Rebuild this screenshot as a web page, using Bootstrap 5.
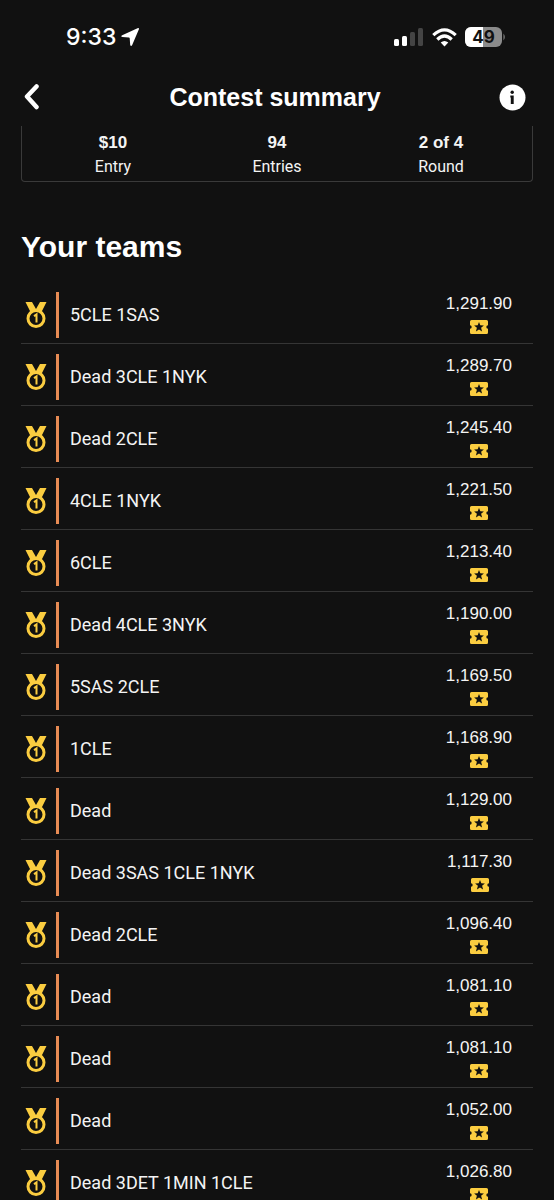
<!DOCTYPE html>
<html lang="en">
<head>
<meta charset="utf-8">
<meta name="viewport" content="width=device-width, initial-scale=1">
<title>Contest summary</title>
<link href="https://cdn.jsdelivr.net/npm/bootstrap@5.3.0/dist/css/bootstrap.min.css" rel="stylesheet">
<style>
  body { background: #111; color: #f4f4f4; font-family: "Liberation Sans", Arial, sans-serif; }
  .status-bar { height: 74px; padding: 0 48px 0 66px; }
  .clock { font: 500 23px/28px Inter, sans-serif; color: #fff; }
  .app-bar { height: 52px; padding: 0 28px 6px 24px; color: #fff; }
  .app-bar h1 { font-size: 25px; line-height: 32px; font-weight: 700; }
  .icon-btn { background: none; border: 0; padding: 0; color: inherit; width: 27px; }
  .scroller { scrollbar-width: none; padding: 0 21px; }
  .scroller::-webkit-scrollbar { display: none; }
  .facts { border: 1px solid #3a3a3a; border-top: 0; border-radius: 0 0 4px 4px; padding: 5px 9px 3px; height: 56px; }
  .facts dt { font-size: 17px; line-height: 24px; font-weight: 700; }
  .facts dd { font: 400 16px/23px Roboto, sans-serif; }
  .section-title { font-size: 30px; line-height: 40px; font-weight: 700; color: #fff; margin: 45px 0 15px; }
  .team { height: 62px; padding: 10px 21px 5px 3px; border-bottom: 1px solid #353535; }
  .team-bar { width: 3px; background: #e78b54; margin: 0 11px 0 8px; }
  .team-name { font: 400 18px/24px Roboto, sans-serif; }
  .score { font: 400 17px/24px "Liberation Sans", Arial, sans-serif; }
</style>
</head>
<body>
<svg class="d-none" aria-hidden="true">
  <symbol id="medal" viewBox="0 0 24 28">
    <path fill="#fbcd40" d="M1.500 1H8l4 7 4-7h6.500l-5 10h-11z"/>
    <circle cx="12" cy="17.500" r="8" fill="#111" stroke="#fbcd40" stroke-width="3"/>
    <path fill="none" stroke="#fbcd40" stroke-width="2" d="M10 15.200l2.500-1.700v8"/>
  </symbol>
  <symbol id="ticket" viewBox="0 0 18 14">
    <path fill="#fbcd40" d="M1.500 0h15Q18 0 18 1.500V5.300a1.700 1.700 0 0 0 0 3.400v3.800Q18 14 16.500 14h-15Q0 14 0 12.500V8.700a1.700 1.700 0 0 0 0-3.400V1.500Q0 0 1.500 0z"/>
    <path fill="#111" d="M9 2l1.300 3.300 3.600.2-2.800 2.300 1 3.600L9 9.400l-3.100 2 1-3.600-2.800-2.300 3.600-.2z"/>
  </symbol>
</svg>

<div class="vh-100 d-flex flex-column overflow-hidden">
  <div class="status-bar d-flex align-items-center justify-content-between flex-shrink-0">
    <div class="d-flex align-items-center">
      <span class="clock">9:33</span>
      <svg class="ms-1" width="20" height="20" viewBox="0 0 20 20" aria-hidden="true"><path fill="#fff" d="M17.500 1.200Q19.500.5 18.800 2.500L12.200 18Q11 20.200 10.200 18L9.700 11.200Q9.600 10.500 8.900 10.400L2.500 10Q.2 9.400 2.200 8.200z"/></svg>
    </div>
    <div class="d-flex align-items-center">
      <svg width="30" height="20" viewBox="0 0 30 20" aria-hidden="true"><rect y="12" width="5" height="7" rx="1.500" fill="#fff"/><rect x="8" y="9" width="5" height="10" rx="1.500" fill="#fff"/><rect x="16" y="5" width="5" height="14" rx="1.500" fill="#444"/><rect x="24" y="1" width="5" height="18" rx="1.500" fill="#444"/></svg>
      <svg class="ms-2" width="25" height="19" viewBox="0 0 25 19" aria-hidden="true"><g fill="none" stroke="#fff" stroke-width="3.200"><path d="M1.300 7.200Q12.500-3.400 23.700 7.200"/><path d="M5.300 11.500Q12.500 4.500 19.700 11.500"/></g><path fill="#fff" d="M8.700 14.500Q12.500 11.300 16.300 14.500L12.500 18.500z"/></svg>
      <svg class="ms-2" width="41" height="20" viewBox="0 0 41 20" role="img" aria-label="Battery 49%"><clipPath id="cell"><rect width="37" height="20" rx="6"/></clipPath><g clip-path="url(#cell)"><rect width="37" height="20" fill="#8b8b8b"/><rect width="18" height="20" fill="#fff"/></g><path fill="#8b8b8b" d="M38.500 6.500q2.500 3.500 0 7z"/><text x="18.500" y="16" text-anchor="middle" font-family="Inter, sans-serif" font-size="17" font-weight="700" fill="#111">49</text></svg>
    </div>
  </div>

  <header class="app-bar d-flex align-items-center justify-content-between flex-shrink-0">
    <button type="button" class="icon-btn d-flex" aria-label="Back"><svg width="16" height="27" viewBox="0 0 16 27"><path fill="none" stroke="#fff" stroke-width="4.500" stroke-linecap="round" stroke-linejoin="round" d="M12.500 2.500L3 12.500 12.500 23"/></svg></button>
    <h1 class="m-0">Contest summary</h1>
    <button type="button" class="icon-btn d-flex" aria-label="Contest information"><svg width="27" height="27" viewBox="0 0 27 27"><circle cx="13.500" cy="13.500" r="13" fill="#fff"/><circle cx="13.200" cy="8.200" r="1.700" fill="#111"/><path fill="#111" d="M11.300 11.500h3.400V20h-2.900v-6.500h-.5z"/></svg></button>
  </header>

  <main class="scroller flex-grow-1 overflow-auto">
    <dl class="facts row g-0 text-center m-0">
      <div class="col"><dt>$10</dt><dd class="m-0">Entry</dd></div>
      <div class="col"><dt>94</dt><dd class="m-0">Entries</dd></div>
      <div class="col"><dt>2 of 4</dt><dd class="m-0">Round</dd></div>
    </dl>
    <h2 class="section-title">Your teams</h2>
    <ul class="list-unstyled m-0" id="teams"></ul>
  </main>
</div>

<script src="https://cdn.jsdelivr.net/npm/bootstrap@5.3.0/dist/js/bootstrap.bundle.min.js"></script>
<script>
  const teams = [
    ["5CLE 1SAS", "1,291.90"], ["Dead 3CLE 1NYK", "1,289.70"], ["Dead 2CLE", "1,245.40"],
    ["4CLE 1NYK", "1,221.50"], ["6CLE", "1,213.40"], ["Dead 4CLE 3NYK", "1,190.00"],
    ["5SAS 2CLE", "1,169.50"], ["1CLE", "1,168.90"], ["Dead", "1,129.00"],
    ["Dead 3SAS 1CLE 1NYK", "1,117.30"], ["Dead 2CLE", "1,096.40"], ["Dead", "1,081.10"],
    ["Dead", "1,081.10"], ["Dead", "1,052.00"], ["Dead 3DET 1MIN 1CLE", "1,026.80"]
  ];
  document.getElementById("teams").innerHTML = teams.map(([name, score]) => `
    <li class="team d-flex">
      <svg class="align-self-center" width="24" height="28" role="img" aria-label="1st place"><use href="#medal"/></svg>
      <span class="team-bar"></span>
      <span class="team-name align-self-center flex-grow-1">${name}</span>
      <span class="d-flex flex-column align-items-center">
        <span class="score">${score}</span>
        <svg class="mt-1" width="18" height="14" aria-hidden="true"><use href="#ticket"/></svg>
      </span>
    </li>`).join("");
</script>
</body>
</html>
